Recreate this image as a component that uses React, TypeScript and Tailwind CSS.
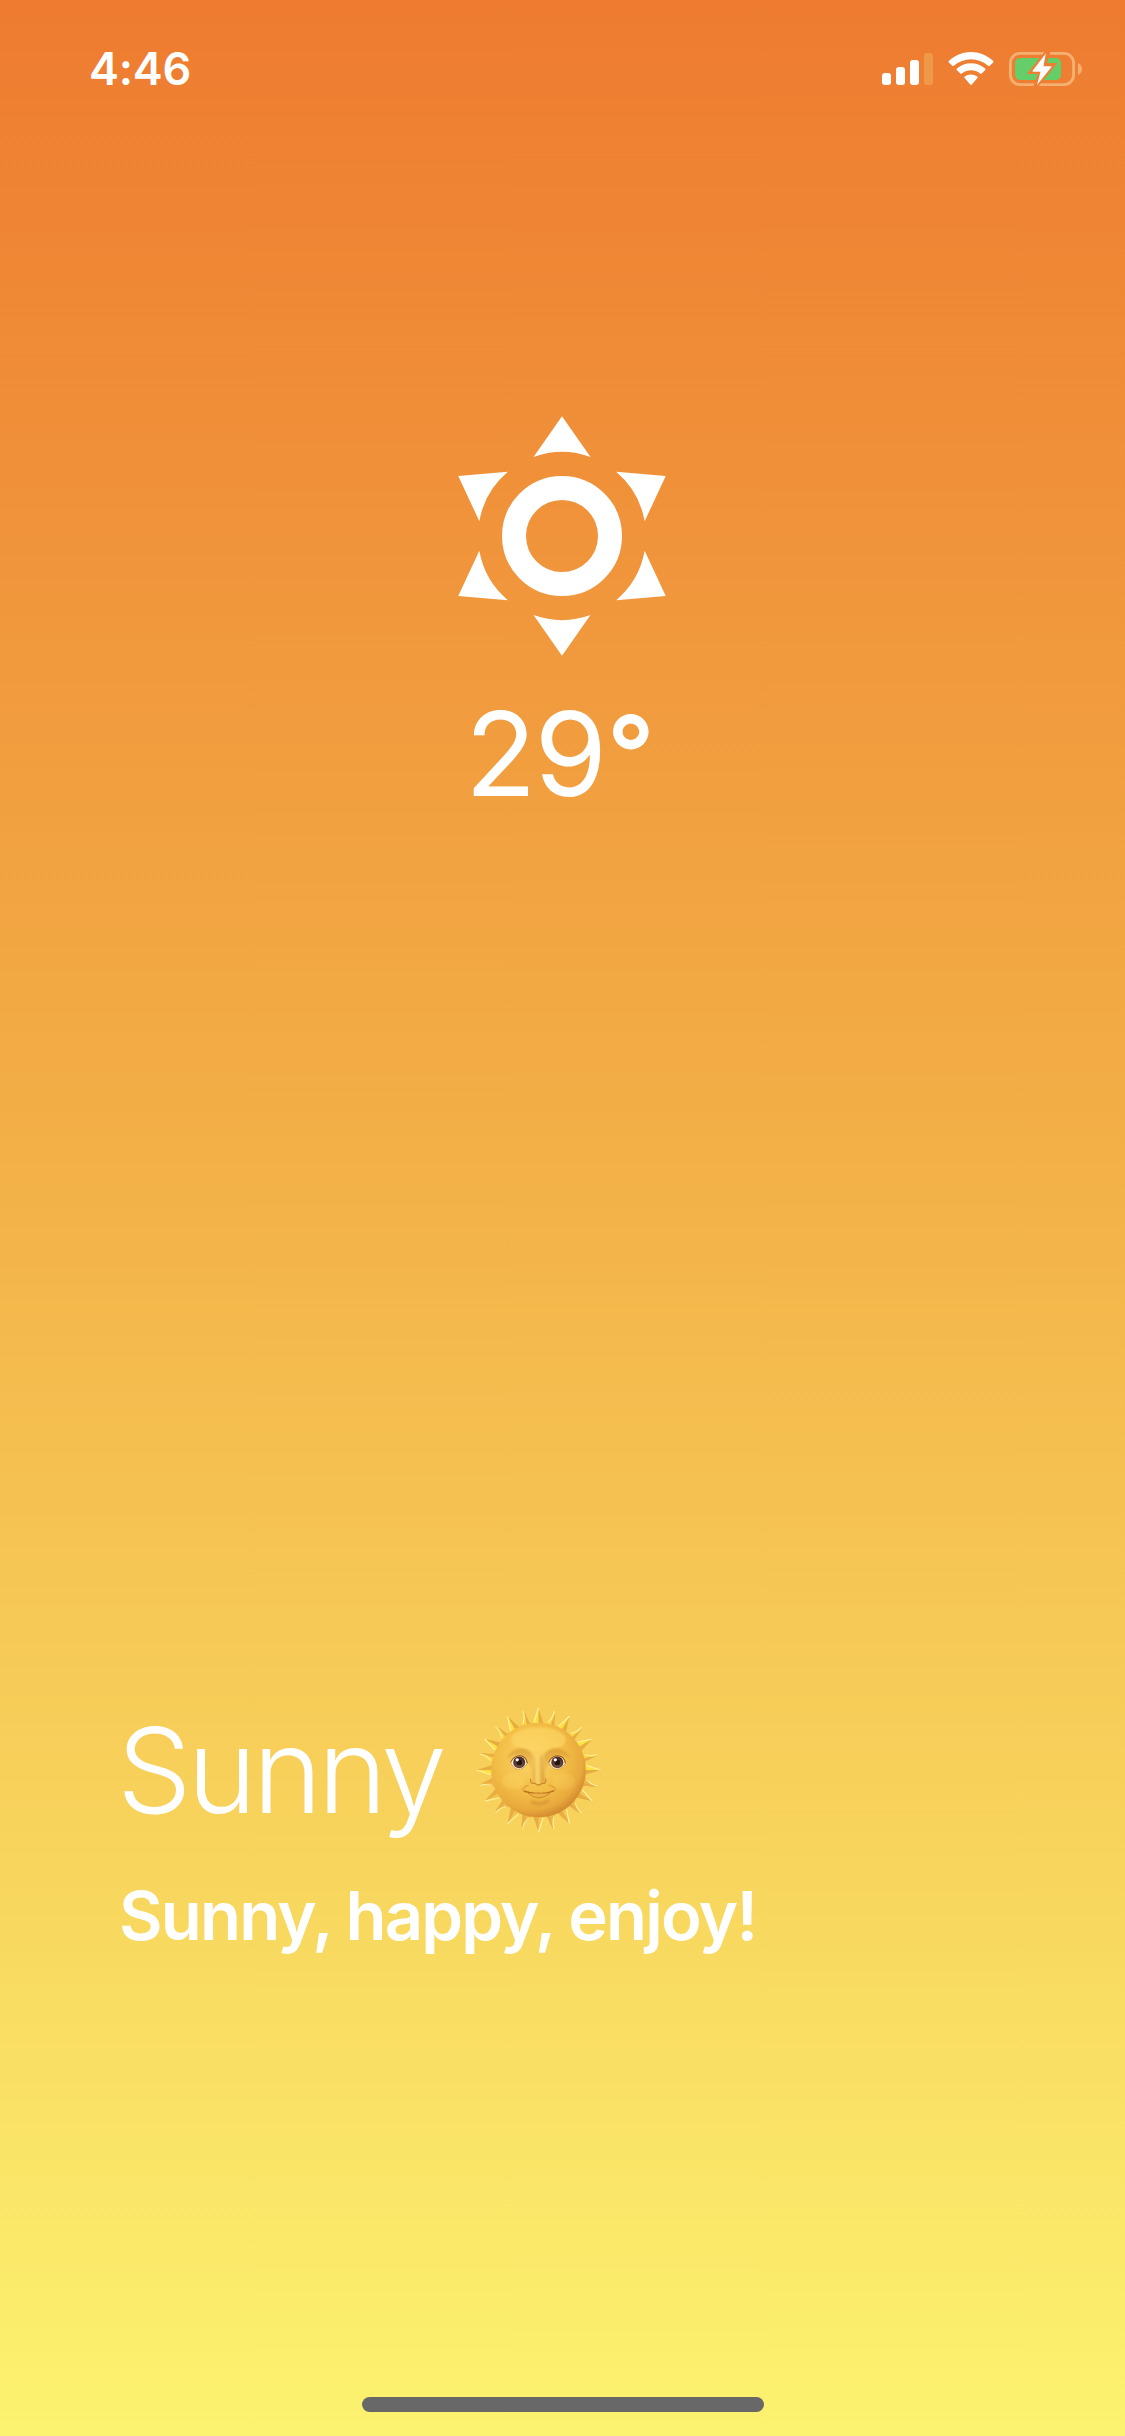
import React from "react";

const rayAngles = Array.from({ length: 24 }, (_, i) => i * 15);

function Signal() {
  return (
    <svg className="block h-[60px] w-[220px]" viewBox="0 0 220 60" fill="none">
      <g fill="#fff">
        <rect x="12" y="33" width="9" height="12" rx="3" />
        <rect x="26" y="27" width="9" height="18" rx="3" />
        <rect x="40" y="20" width="9" height="25" rx="3" />
        <rect x="54" y="13" width="9" height="32" rx="3" fill="#f09849" />
        <path d="M78.8 22.4 Q78.2 21.6 79 20.8 C91.5 9 110.500 9 123 20.800 Q123.800 21.600 123.200 22.400 L119.700 25.800 Q119 26.400 118.200 25.700 C108.500 17 93.500 17 83.800 25.700 Q83 26.400 82.300 25.800 Z" />
        <path d="M86.700 30 Q86.100 29.300 86.900 28.500 C95 21.500 107 21.500 115.100 28.500 Q115.900 29.300 115.200 30 L111.600 33.600 Q110.900 34.200 110.100 33.600 C104.800 29.200 97.200 29.200 91.900 33.600 Q91.100 34.200 90.400 33.600 Z" />
        <path d="M94.600 37.900 Q93.900 37.200 94.700 36.500 C98.400 33.700 103.600 33.700 107.300 36.500 Q108.100 37.200 107.400 37.900 L101.800 44.400 Q101 45.200 100.200 44.400 Z" />
      </g>
      <mask id="bolt-gap">
        <rect width="220" height="60" fill="#fff" />
        <path d="M176 10 L157 34 H168 L162.500 48 L167 48 L187.500 23 H177 L181 10 Z" fill="#000" />
      </mask>
      <g mask="url(#bolt-gap)">
        <rect x="140.400" y="13.400" width="63.200" height="31.200" rx="9.500" stroke="#f4b070" strokeWidth="2.900" />
        <rect x="145" y="18" width="46" height="22" rx="5" fill="#66ce69" />
      </g>
      <path d="M208 23 C213.300 25.500 213.300 32.500 208 35 Z" fill="#f4b070" />
      <path d="M175.800 13.500 L162.600 30.800 Q162.200 31.700 163.200 31.700 H170.500 L167 45 L181.500 27.100 Q181.900 26.300 181 26.200 H173.500 Z" fill="#fff" />
    </svg>
  );
}

function SunIcon() {
  return (
    <svg className="mr-px block h-[240px] w-[210px]" viewBox="-105 -120 210 240">
      <circle r="48" fill="none" stroke="#fff" strokeWidth="24" />
      {[0, 60, 120, 180, 240, 300].map((a) => (
        <path key={a} transform={`rotate(${a})`} d="M0 -119.800 L28.500 -79 A84 84 0 0 0 -28.500 -79 Z" fill="#fff" />
      ))}
    </svg>
  );
}

function SunFace() {
  return (
    <svg className="block h-[126px] w-[126px]" viewBox="-62.500 -62 124 124">
      <defs>
        <radialGradient id="disk" cx="0.420" cy="0.380" r="0.640">
          <stop offset="0" stopColor="#fbd669" />
          <stop offset="0.550" stopColor="#f3be47" />
          <stop offset="0.850" stopColor="#e9a93c" />
          <stop offset="1" stopColor="#d28a2e" />
        </radialGradient>
        <linearGradient id="brow" x1="0" y1="0" x2="0" y2="1">
          <stop offset="0" stopColor="#d28d28" stopOpacity="0.600" />
          <stop offset="1" stopColor="#d28d28" stopOpacity="0" />
        </linearGradient>
        <linearGradient id="nose" x1="0" x2="1">
          <stop offset="0" stopColor="#d49026" stopOpacity="0.550" />
          <stop offset="0.400" stopColor="#ffe078" stopOpacity="0.750" />
          <stop offset="1" stopColor="#c77f20" stopOpacity="0.650" />
        </linearGradient>
        <radialGradient id="iris" cx="0.500" cy="0.650" r="0.600">
          <stop offset="0" stopColor="#8b6057" />
          <stop offset="1" stopColor="#3f2622" />
        </radialGradient>
        <filter id="soft" x="-30%" y="-30%" width="160%" height="160%">
          <feGaussianBlur stdDeviation="1.300" />
        </filter>
      </defs>
      {rayAngles.map((a, i) => (
        <g key={a} transform={`rotate(${a})`}>
          {i % 2 === 0 ? (
            <>
              <path d="M-5.500 -44 L0 -61 L5.500 -44 Z" fill={a > 100 && a < 260 ? "#f2c54c" : "#fde23e"} />
              <path d="M0 -61 L5.500 -44 L0 -44 Z" fill="#e8ac45" />
              <path d="M-4.500 -47 L0 -61" stroke="#fff1a0" strokeWidth="1.200" />
            </>
          ) : (
            <>
              <path d="M-5 -44 C-4 -51 1 -53 0 -60 C4 -55 1 -51 5.500 -44 Z" fill={a > 100 && a < 260 ? "#efb943" : "#fbd842"} />
              <path d="M0 -60 C4 -55 1 -51 5.500 -44 L1 -44 C-1 -51 3 -54 0 -60 Z" fill="#e8ac49" />
              <path d="M-3 -48 C-1 -52 1 -54 0 -60" fill="none" stroke="#fff0a0" strokeWidth="1.100" />
            </>
          )}
        </g>
      ))}
      <circle r="46.500" fill="url(#disk)" />
      <ellipse cx="0" cy="-30" rx="27" ry="12" fill="#ffd968" opacity="0.600" filter="url(#soft)" />
      <g filter="url(#soft)">
        <path d="M-31 -11 C-27 -24 -9 -25 -5 -13 L-5 7 C-8 -2 -12 -14 -20 -15 C-25 -15 -28 -12 -31 -11 Z" fill="url(#brow)" />
        <path d="M31 -11 C27 -24 9 -25 5 -13 L5 7 C8 -2 12 -14 20 -15 C25 -15 28 -12 31 -11 Z" fill="url(#brow)" />
        <path d="M-4 -14 L-6 11 Q0 17 6 11 L4 -14 Z" fill="url(#nose)" />
        <ellipse cx="-25" cy="11" rx="11" ry="8" fill="#ffdf70" opacity="0.250" />
        <ellipse cx="25" cy="11" rx="11" ry="8" fill="#ffdf70" opacity="0.200" />
        <path d="M-7 31 Q0 36 10 30" fill="none" stroke="#c9862c" strokeWidth="3" opacity="0.500" />
      </g>
      <g fill="none" stroke="#bc6f1d" strokeLinecap="round">
        <path d="M-8 9 Q-8 14 -3.500 13 Q0 16.500 3.500 13 Q8 14 7 9" strokeWidth="1.300" opacity="0.650" />
        <path d="M-14 21 Q-7 23.500 0 23 Q8 23.500 15 20.500" strokeWidth="1.500" />
        <path d="M-10 23 Q0 32 11 23" fill="#eeb34a" strokeWidth="0.900" opacity="0.700" />
        <path d="M-10 15 Q-14 16 -16 20 M10 15 Q15 16 17 19" strokeWidth="1" opacity="0.450" />
      </g>
      {[-19, 18.500].map((x) => (
        <g key={x} transform={`translate(${x} -7.500)`}>
          <path d="M-8.500 0 Q-5 -7 1 -6.500 Q7 -6 8 1 Q4 7 -1 7 Q-6 6 -8.500 0 Z" fill="#fff0cb" stroke="#d2983a" strokeWidth="0.800" />
          <circle r="5.900" fill="url(#iris)" />
          <circle r="2.800" fill="#23140f" />
          <circle cx="-2" cy="-2.500" r="1.600" fill="#fff" />
          <path d="M-8.500 0 Q-5 -7 1 -6.500 Q7 -6 8 1" fill="none" stroke="#9a5c25" strokeWidth="1" />
        </g>
      ))}
    </svg>
  );
}

export default function App() {
  return (
    <main className="flex h-[2436px] w-[1125px] flex-col overflow-hidden bg-linear-to-b/srgb from-[#ee7b30] via-[#f3b348] to-[#fcf370] font-[Inter,sans-serif] text-white">
      <header className="flex h-[132px] items-start justify-between pt-10 pr-[35px] pl-[89px]">
        <time className="pt-px text-[45px] leading-[56px] font-semibold tracking-[-0.3px]">4:46</time>
        <Signal />
      </header>
      <section className="flex h-[1086px] flex-col items-center pt-[284px]">
        <SunIcon />
        <div className="mt-[26px] mr-[5px] flex items-baseline text-[117px] leading-[144px] font-[390] tracking-[-2px]">
          29
          <span className="relative -top-[6px] w-[50px] pl-[2px] text-[104px] leading-[100px] font-semibold">°</span>
        </div>
      </section>
      <section className="flex grow flex-col items-start pt-[480px] pl-[117px]">
        <div className="flex h-[144px] items-center">
          <h1 className="w-[358px] text-[118px] leading-[144px] font-[300] tracking-[-4.200px]">Sunny</h1>
          <SunFace />
        </div>
        <p className="mt-[31px] ml-[2px] text-[67px] leading-[86px] font-semibold tracking-[-1.800px] whitespace-nowrap">Sunny, happy, enjoy!</p>
      </section>
      <footer className="flex h-[39px] items-start justify-center">
        <div className="h-[15px] w-[402px] rounded-full bg-[#686868]" />
      </footer>
    </main>
  );
}
